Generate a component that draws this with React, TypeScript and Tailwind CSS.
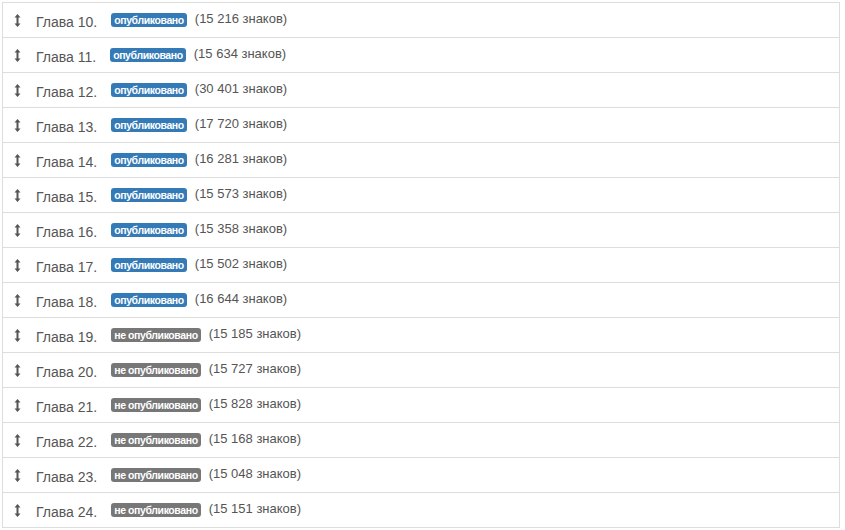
const chapters: [number, boolean, string][] = [
  [10, true, "15 216"],
  [11, true, "15 634"],
  [12, true, "30 401"],
  [13, true, "17 720"],
  [14, true, "16 281"],
  [15, true, "15 573"],
  [16, true, "15 358"],
  [17, true, "15 502"],
  [18, true, "16 644"],
  [19, false, "15 185"],
  [20, false, "15 727"],
  [21, false, "15 828"],
  [22, false, "15 168"],
  [23, false, "15 048"],
  [24, false, "15 151"],
];

function ResizeIcon() {
  return (
    <svg width="7" height="13" viewBox="0 0 7 13" className="shrink-0">
      <path d="M3.5 0 L6.5 3.5 H4.5 V9.5 H6.5 L3.5 13 L0.5 9.5 H2.5 V3.5 H0.5 Z" fill="#555" />
    </svg>
  );
}

export default function App() {
  return (
    <div className="min-h-[530px] bg-white pt-[2px] pl-[2px] font-['Liberation_Sans',Arial,sans-serif] text-[#555]">
      <div className="w-[838px] border border-[#ddd] divide-y divide-[#ddd]">
        {chapters.map(([num, published, chars]) => (
          <div key={num} className="box-content flex h-[34px] items-center pl-[11px]">
            <ResizeIcon />
            <span className="ml-[15px] mt-[3px] text-[14px] leading-[16px]">
              Глава {num}.
            </span>
            {/* status label */}
            <span
              className={`ml-[14px] rounded-[3px] px-[3px] text-[10.5px] font-semibold leading-[14px] tracking-[-0.4px] text-white ${
                published ? "bg-[#337ab7]" : "bg-[#777]"
              }`}
            >
              {published ? "опубликовано" : "не опубликовано"}
            </span>
            <span className="mb-[3px] ml-[8px] text-[13px] leading-[15px]">({chars} знаков)</span>
          </div>
        ))}
      </div>
    </div>
  );
}
